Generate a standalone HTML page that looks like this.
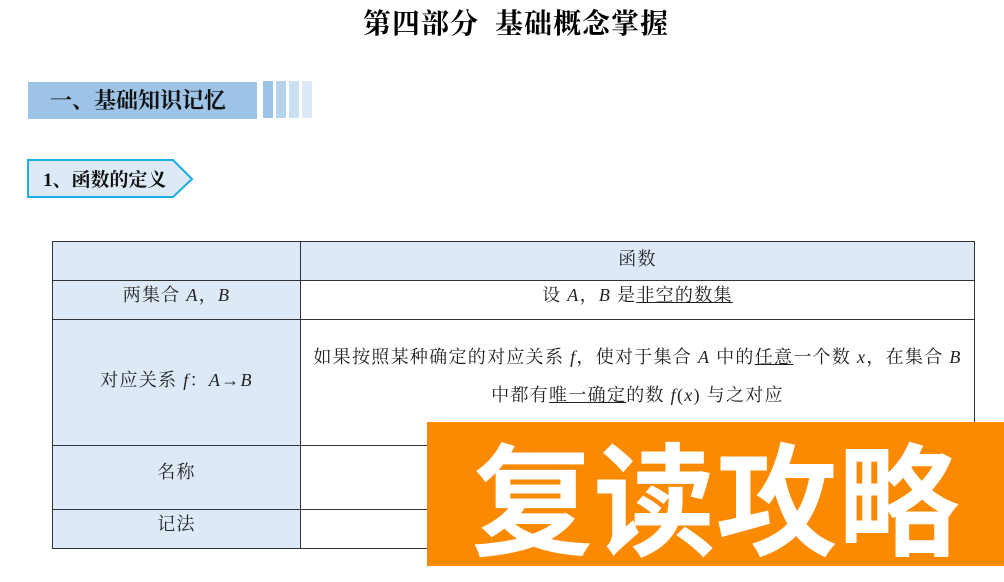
<!DOCTYPE html>
<html><head><meta charset="utf-8"><style>
*{margin:0;padding:0;box-sizing:border-box}
body{width:1004px;height:566px;background:#fff;position:relative;overflow:hidden;font-family:"Liberation Serif","Noto Serif CJK SC","Noto Sans CJK SC",serif;color:#222}
.abs{position:absolute}
.title{left:0;width:1032px;top:2px;text-align:center;font-size:28px;font-weight:bold;font-family:"Liberation Serif","Noto Serif CJK SC",serif;color:#000;letter-spacing:1px}
.h1{left:28px;top:82px;width:229px;height:37px;background:#9dc3e6;font-size:22px;font-weight:bold;line-height:37px;padding-left:22px;color:#111;font-family:"Liberation Serif","Noto Serif CJK SC",serif}
.bar{top:81px;height:37px}
table{position:absolute;left:52px;top:241px;width:923px;border-collapse:collapse;font-size:18px;letter-spacing:1.3px}
td{border:1.5px solid #333;text-align:center;vertical-align:middle}
td.l{background:#dde9f6;width:248px}
i{font-family:"Liberation Serif",serif}
u{text-decoration:underline}
.orange{left:427px;top:422px;width:577px;height:144px;background:#fb8a00;color:#fff;font-family:"Noto Sans CJK SC","WenQuanYi Zen Hei",sans-serif;font-size:122px;line-height:144px;text-align:center;letter-spacing:0px;font-weight:bold}
</style></head><body>
<div class="abs title">第四部分&nbsp; 基础概念掌握</div>
<div class="abs h1">一、基础知识记忆</div>
<div class="abs bar" style="left:263px;width:10px;background:#9dc3e6"></div>
<div class="abs bar" style="left:276px;width:10px;background:#b7d3ec"></div>
<div class="abs bar" style="left:289px;width:10px;background:#cbdff2"></div>
<div class="abs bar" style="left:302px;width:10px;background:#dde9f6"></div>
<svg class="abs" style="left:27px;top:159px" width="168" height="40">
<polygon points="1,1 146,1 165,20 146,38 1,38" fill="#dde9f6" stroke="#1aaee6" stroke-width="2"/>
<text x="16" y="27" font-size="19" font-weight="bold" font-family="Liberation Serif,Noto Serif CJK SC,serif" fill="#111">1、函数的定义</text>
</svg>
<table>
<tr style="height:39px"><td class="l"></td><td style="background:#dde9f6;padding-bottom:6px">函数</td></tr>
<tr style="height:39px"><td class="l" style="padding-bottom:12px">两集合 <i>A</i>，<i>B</i></td><td style="padding-bottom:12px">设 <i>A</i>，<i>B</i> 是<u>非空的数集</u></td></tr>
<tr style="height:126px"><td class="l" style="padding-bottom:8px">对应关系 <i>f</i>：<i>A</i>→<i>B</i></td><td style="line-height:38px;padding:0 4px 14px">如果按照某种确定的对应关系 <i>f</i>，使对于集合 <i>A</i> 中的<u>任意</u>一个数 <i>x</i>，在集合 <i>B</i><br>中都有<u>唯一确定</u>的数 <i>f</i>(<i>x</i>) 与之对应</td></tr>
<tr style="height:64px"><td class="l" style="padding-bottom:14px">名称</td><td></td></tr>
<tr style="height:39px"><td class="l" style="padding-bottom:12px">记法</td><td></td></tr>
</table>
<div class="abs orange">复读攻略</div>
</body></html>
